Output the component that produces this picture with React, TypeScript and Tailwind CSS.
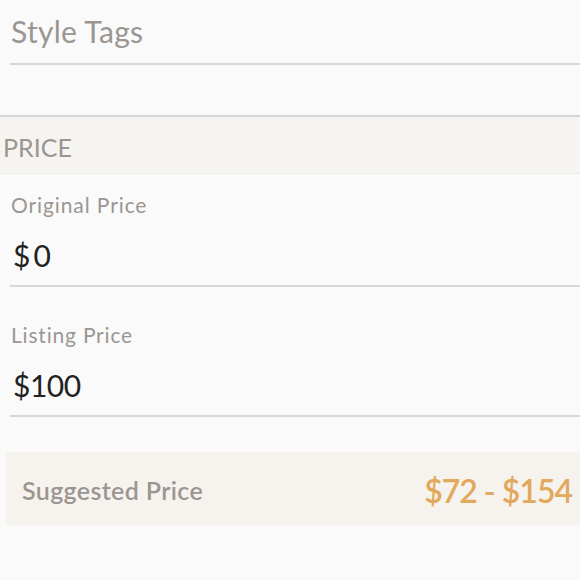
import React from "react";

export default function App() {
  const font = { fontFamily: "Lato, 'Noto Sans', sans-serif" };
  return (
    <div className="w-[580px] h-[580px] bg-[#fafafa] overflow-hidden" style={font}>
      <div className="pl-[10px]">
        <div className="h-[65px] border-b-2 border-[#d8d8d8]">
          <div className="pt-[16px] pl-px text-[30px] leading-[30px] tracking-[0.3px] text-[#9b9691]">Style Tags</div>
        </div>
      </div>
      <div className="h-[50px]" />
      <div className="border-t-2 border-b border-t-[#d6d6d6] border-b-[#ececec] bg-[#f6f4f0] h-[59px]">
        <div className="pt-[18px] pl-[3px] text-[25px] leading-[25px] text-[#9b9691]">PRICE</div>
      </div>
      <div className="pl-[10px]">
        <div className="border-b-2 border-[#d8d8d8] pb-[15px]">
          <div className="pt-[20px] pl-px text-[21px] leading-[21px] tracking-[0.9px] text-[#9b9691]">Original Price</div>
          <div className="pt-[25px] pl-[3px] text-[30px] leading-[30px] text-[#222222]">$<span className="ml-[3px]">0</span></div>
        </div>
        <div className="border-b-2 border-[#d8d8d8] pb-[15px]">
          <div className="pt-[37px] pl-px text-[21px] leading-[21px] tracking-[0.8px] text-[#9b9691]">Listing Price</div>
          <div className="pt-[25px] pl-[3px] text-[30px] leading-[30px] tracking-[-0.5px] text-[#222222]">$100</div>
        </div>
      </div>
      <div className="mt-[35px] ml-[6px] h-[73px] bg-[#f6f3ef] flex items-center justify-between pt-[4px] pl-[16px] pr-[8px]">
        <div className="text-[25px] font-semibold tracking-[0.35px] text-[#9b9691]">Suggested Price</div>
        <div className="text-[32px] font-semibold tracking-[-1px] text-[#e2a85b]">$72 - $154</div>
      </div>
    </div>
  );
}
